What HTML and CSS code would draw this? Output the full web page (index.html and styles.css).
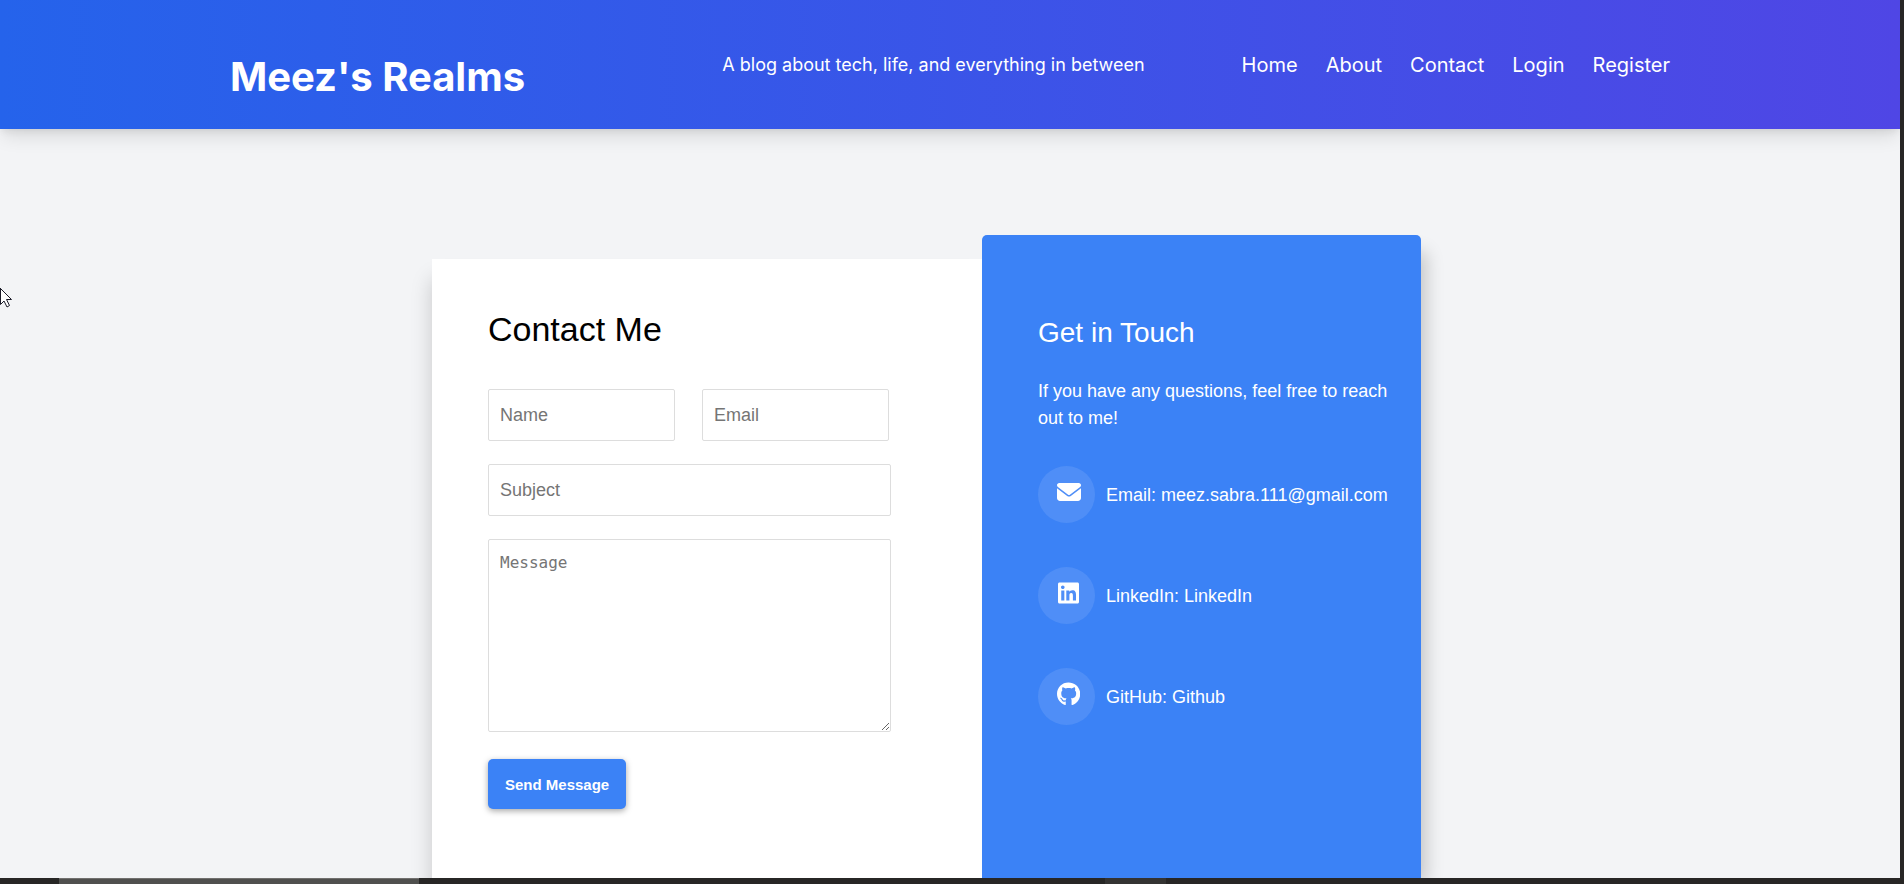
FILE: index.html
```
<!DOCTYPE html>
<html lang="en">
<head>
<meta charset="utf-8">
<meta name="viewport" content="width=device-width, initial-scale=1">
<title>Contact | Meez's Realms</title>
<link rel="stylesheet" href="styles.css">
</head>
<body>
<div class="window">
  <div class="page">
    <header class="site-header">
      <div class="header-inner">
        <h1 class="site-title">Meez's Realms</h1>
        <p class="tagline">A blog about tech, life, and everything in between</p>
        <nav class="site-nav">
          <a href="#home">Home</a>
          <a href="#about">About</a>
          <a href="#contact">Contact</a>
          <a href="#login">Login</a>
          <a href="#register">Register</a>
        </nav>
      </div>
    </header>
    <main class="contact" id="contact">
      <section class="form-card">
        <h2 class="form-title">Contact Me</h2>
        <form class="form">
          <div class="form-row">
            <input class="field" type="text" name="name" placeholder="Name" aria-label="Name">
            <input class="field" type="email" name="email" placeholder="Email" aria-label="Email">
          </div>
          <input class="field" type="text" name="subject" placeholder="Subject" aria-label="Subject">
          <textarea class="field message" name="message" placeholder="Message" aria-label="Message"></textarea>
          <button class="send" type="submit">Send Message</button>
        </form>
      </section>
      <aside class="info-card">
        <h3 class="info-title">Get in Touch</h3>
        <p class="info-text">If you have any questions, feel free to reach out to me!</p>
        <ul class="channels">
          <li class="channel">
            <span class="badge"><svg class="icon" viewBox="0 0 512 512" aria-hidden="true"><path d="M48 64C21.500 64 0 85.500 0 112c0 15.100 7.100 29.300 19.200 38.400L236.800 313.600c11.400 8.500 27 8.500 38.400 0L492.800 150.400c12.100-9.100 19.200-23.300 19.200-38.400c0-26.500-21.500-48-48-48H48zM0 176V384c0 35.300 28.700 64 64 64H448c35.300 0 64-28.700 64-64V176L294.400 339.200c-22.800 17.100-54 17.100-76.800 0L0 176z"/></svg></span>
            <p>Email: <a href="mailto:meez.sabra.111@gmail.com">meez.sabra.111@gmail.com</a></p>
          </li>
          <li class="channel">
            <span class="badge"><svg class="icon" viewBox="0 0 448 512" aria-hidden="true"><path d="M416 32H31.9C14.3 32 0 46.5 0 64.3v383.4C0 465.5 14.3 480 31.9 480H416c17.6 0 32-14.5 32-32.3V64.3c0-17.8-14.4-32.3-32-32.3zM135.4 416H69V202.2h66.5V416zm-33.2-243c-21.3 0-38.5-17.3-38.5-38.5S80.9 96 102.2 96c21.2 0 38.5 17.3 38.5 38.5 0 21.3-17.2 38.5-38.5 38.5zm282.1 243h-66.4V312c0-24.8-.5-56.7-34.5-56.7-34.6 0-39.9 27-39.9 54.9V416h-66.4V202.2h63.7v29.2h.9c8.9-16.8 30.6-34.5 62.9-34.5 67.2 0 79.7 44.3 79.7 101.9V416z"/></svg></span>
            <p>LinkedIn: <a href="#linkedin">LinkedIn</a></p>
          </li>
          <li class="channel">
            <span class="badge"><svg class="icon" viewBox="0 0 496 512" aria-hidden="true"><path d="M165.9 397.4c0 2-2.3 3.6-5.2 3.6-3.3.3-5.6-1.3-5.6-3.6 0-2 2.3-3.6 5.2-3.6 3-.3 5.6 1.3 5.6 3.6zm-31.1-4.5c-.7 2 1.3 4.3 4.3 4.9 2.6 1 5.6 0 6.2-2s-1.3-4.3-4.3-5.2c-2.6-.7-5.5.3-6.2 2.3zm44.2-1.7c-2.9.7-4.9 2.6-4.6 4.9.3 2 2.9 3.3 5.9 2.6 2.9-.7 4.9-2.6 4.6-4.6-.3-1.9-3-3.2-5.9-2.9zM244.8 8C106.1 8 0 113.3 0 252c0 110.9 69.8 205.8 169.5 239.2 12.8 2.3 17.3-5.6 17.3-12.1 0-6.2-.3-40.4-.3-61.4 0 0-70 15-84.7-29.8 0 0-11.4-29.1-27.8-36.6 0 0-22.9-15.7 1.6-15.4 0 0 24.9 2 38.6 25.8 21.9 38.6 58.6 27.5 72.9 20.9 2.3-16 8.8-27.1 16-33.7-55.9-6.2-112.3-14.3-112.3-110.5 0-27.5 7.6-41.3 23.6-58.9-2.6-6.5-11.1-33.3 2.6-67.9 20.9-6.5 69 27 69 27 20-5.6 41.5-8.5 62.8-8.5s42.8 2.9 62.8 8.5c0 0 48.1-33.6 69-27 13.7 34.7 5.2 61.4 2.6 67.9 16 17.7 25.8 31.5 25.8 58.9 0 96.5-58.9 104.2-114.8 110.5 9.2 7.9 17 22.9 17 46.4 0 33.7-.3 75.4-.3 83.6 0 6.5 4.6 14.4 17.3 12.1C428.2 457.8 496 362.9 496 252 496 113.3 383.5 8 244.8 8z"/></svg></span>
            <p>GitHub: <a href="#github">Github</a></p>
          </li>
        </ul>
      </aside>
    </main>
  </div>
  <div class="taskbar">
    <div class="task task-active"></div>
    <div class="task"></div>
  </div>
  <svg class="pointer" viewBox="0 0 12 20" aria-hidden="true"><path d="M-5 -5L11.500 11.500H6.500L9.500 17.500L7 19L4 13L.500 16.500V.500Z" fill="#fff" stroke="#1b1b28"/></svg>
</div>
</body>
</html>
```
FILE: styles.css
```
* {
  box-sizing: border-box;
}

body {
  margin: 0;
  font-family: "Liberation Sans", Arial, sans-serif;
  font-size: 18px;
  line-height: 27px;
  color: #000;
}

h1, h2, h3, p, ul {
  margin: 0;
  padding: 0;
  font-weight: 400;
}

a {
  color: inherit;
  text-decoration: none;
}

.window {
  position: relative;
  display: flex;
  flex-direction: column;
  height: 100vh;
  background: #272625;
}

.page {
  flex: 1;
  min-height: 0;
  display: flex;
  flex-direction: column;
  margin-right: 4px;
  overflow: hidden;
  background: #f3f4f6;
}

.site-header {
  position: relative;
  flex: none;
  padding: 0 24px;
  background: linear-gradient(to right, #2563eb, #4f46e5);
  box-shadow: 0 11px 17px -3px rgba(0, 0, 0, 0.1), 0 4px 7px -2px rgba(0, 0, 0, 0.08);
  font-family: Inter, sans-serif;
  color: #fff;
}

.header-inner {
  display: flex;
  align-items: center;
  gap: 97px;
  max-width: 1440px;
  margin: 0 auto;
}

.site-title {
  flex: 1;
  padding: 51px 0 26px;
  font-size: 40px;
  line-height: 52px;
  font-weight: 700;
}

.site-nav {
  display: flex;
  gap: 28px;
  font-size: 20px;
  line-height: 28px;
}

.contact {
  flex: 1;
  display: grid;
  grid-template-columns: 550fr 439fr;
  width: 100%;
  max-width: 1036px;
  margin: 106px auto 0;
  padding-right: 47px;
}

.form-card {
  margin-top: 24px;
  padding: 50px 56px 70px;
  background: #fff;
  box-shadow: 0 20px 20px rgba(0, 0, 0, 0.18);
}

.form-title {
  margin-bottom: 40px;
  font-size: 34px;
  line-height: 40px;
}

.form {
  display: flex;
  flex-direction: column;
  align-items: flex-start;
  gap: 23px;
  width: 92%;
}

.form-row {
  display: grid;
  grid-template-columns: 1fr 1fr;
  gap: 27px;
  width: 100%;
  padding-right: 2px;
}

.field {
  width: 100%;
  height: 52px;
  padding: 10px 11px;
  border: 1px solid #ddd;
  border-radius: 2px;
  background: #fff;
  font: 18px "Liberation Sans", Arial, sans-serif;
}

.field::placeholder {
  color: #757575;
}

.message {
  height: 193px;
  padding-top: 13px;
  font: 16px "DejaVu Sans Mono", monospace;
}

.send {
  height: 50px;
  margin-top: 4px;
  padding: 0 17px;
  border: 0;
  border-radius: 5px;
  background: #3b82f6;
  box-shadow: 0 2px 6px rgba(0, 0, 0, 0.35);
  color: #fff;
  font: 700 15px "Liberation Sans", Arial, sans-serif;
}

.info-card {
  position: relative;
  padding: 82px 28px 56px 56px;
  border-radius: 5px 5px 0 0;
  background: #3b82f6;
  box-shadow: 11px 11px 17px -6px rgba(0, 0, 0, 0.2);
  color: #fff;
}

.info-title {
  margin-bottom: 29px;
  font-size: 28px;
  line-height: 32px;
}

.info-text {
  margin-bottom: 34px;
}

.channels {
  display: grid;
  gap: 44px;
  list-style: none;
}

.channel {
  display: flex;
  align-items: center;
  gap: 11px;
}

.channel p {
  padding-top: 2px;
}

.badge {
  flex: none;
  display: grid;
  place-items: center;
  width: 57px;
  height: 57px;
  padding: 0 0 6px 4px;
  border-radius: 50%;
  background: rgba(255, 255, 255, 0.1);
}

.icon {
  height: 24px;
  fill: currentColor;
}

.taskbar {
  position: relative;
  flex: none;
  display: flex;
  justify-content: space-between;
  height: 6px;
  padding: 0 738px 0 59px;
  background: #272625;
}

.task {
  width: 61px;
  background: #343332;
}

.task-active {
  width: 360px;
  border-top: 1px solid #71706e;
  background: #50504e;
}

.pointer {
  position: absolute;
  top: 288px;
  left: 0;
  width: 12px;
  height: 20px;
}
```
